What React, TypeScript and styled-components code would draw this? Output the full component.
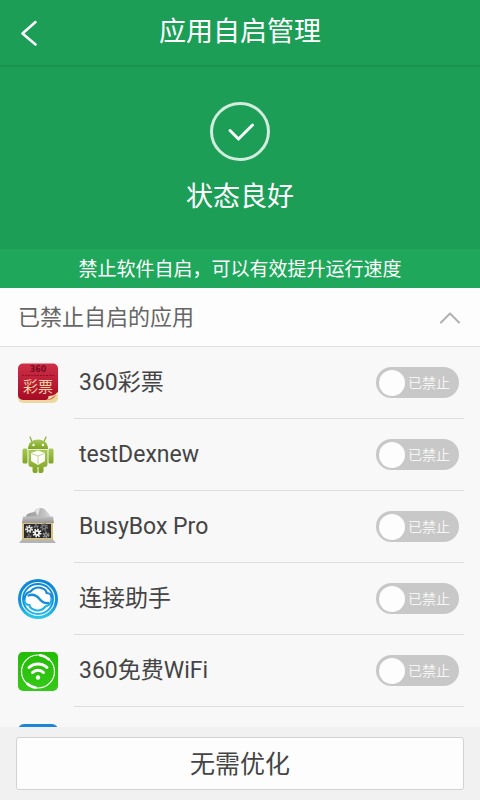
import React, { useState } from "react";
import styled, { createGlobalStyle } from "styled-components";

const GlobalStyle = createGlobalStyle`
  *, *::before, *::after { box-sizing: border-box; }
  body {
    margin: 0;
    background: #f8f8f8;
    font-family: Roboto, "Noto Sans CJK SC", sans-serif;
  }
  button { font: inherit; border: 0; padding: 0; background: none; cursor: pointer; }
`;

const Page = styled.div`
  display: flex;
  flex-direction: column;
  height: 100vh;
  overflow: hidden;
`;

const Header = styled.header`
  flex: none;
  display: grid;
  grid-template-columns: 64px 1fr 64px;
  height: 67px;
  background: #1c9e57;
  border-bottom: 2px solid #19914f;
`;

const BackButton = styled.button`
  display: flex;
  align-items: center;
  padding-left: 20px;
`;

const Title = styled.h1`
  margin: 0;
  font-size: 27px;
  font-weight: 400;
  line-height: 65px;
  text-align: center;
  color: #fff;
`;

const Hero = styled.section`
  flex: none;
  display: flex;
  flex-direction: column;
  align-items: center;
  gap: 18px;
  height: 182px;
  padding-top: 34px;
  background: #1c9e57;
`;

const Status = styled.p`
  margin: 0;
  font-size: 27px;
  line-height: 36px;
  color: #fff;
`;

const Notice = styled.p`
  flex: none;
  margin: 0;
  padding-top: 3px;
  font-size: 19px;
  line-height: 36px;
  text-align: center;
  white-space: nowrap;
  color: #fff;
  background: #1fa85c;
`;

const SectionButton = styled.button`
  flex: none;
  display: flex;
  align-items: center;
  justify-content: space-between;
  width: 100%;
  height: 59px;
  && { padding: 2px 20px 0 18px; background: #fdfdfd; border-bottom: 1px solid #dfdfdf; }
`;

const SectionTitle = styled.span`
  font-size: 22px;
  line-height: 32px;
  color: #666;
`;

const List = styled.ul`
  flex: 1;
  min-height: 0;
  margin: 0;
  padding: 0;
  overflow: hidden;
  list-style: none;
  background: #f8f8f8;
`;

const Row = styled.li`
  display: flex;
  gap: 16px;
  height: 72px;
  padding: 0 16px 0 18px;
`;

const IconSlot = styled.span`
  flex: none;
  display: flex;
  align-items: center;
  width: 40px;
`;

const RowBody = styled.div`
  flex: 1;
  display: flex;
  align-items: center;
  justify-content: space-between;
  padding: 0 5px;
  border-bottom: 1px solid #dedede;
`;

const AppName = styled.span`
  padding-top: 1px;
  font-size: 23px;
  line-height: 32px;
  color: #444;
`;

const Switch = styled.label<{ $allowed: boolean }>`
  position: relative;
  display: flex;
  flex-direction: ${(p) => (p.$allowed ? "row-reverse" : "row")};
  align-items: center;
  gap: 3px;
  width: 83px;
  height: 31px;
  padding: 0 3px;
  border-radius: 16px;
  background: ${(p) => (p.$allowed ? "#1fa85c" : "#c8c8c8")};
  cursor: pointer;
`;

const SwitchInput = styled.input`
  position: absolute;
  inset: 0;
  width: 100%;
  height: 100%;
  margin: 0;
  opacity: 0;
  cursor: pointer;
`;

const Knob = styled.span`
  flex: none;
  width: 26px;
  height: 26px;
  border-radius: 50%;
  background: #fdfdfd;
`;

const SwitchText = styled.span`
  font-size: 14px;
  line-height: 20px;
  white-space: nowrap;
  color: #f5f5f5;
`;

const Footer = styled.footer`
  flex: none;
  padding: 10px 16px;
  background: #f1f1f1;
`;

const OptimizeButton = styled.button`
  display: block;
  width: 100%;
  height: 53px;
  && {
    padding-top: 3px;
    font-size: 25px;
    line-height: 48px;
    color: #444;
    background: #fdfdfd;
    border: 1px solid #d3d3d3;
    border-radius: 3px;
  }
`;

const LotteryIcon = () => (
  <svg width="40" height="40" viewBox="0 0 40 40" aria-hidden="true">
    <defs>
      <linearGradient id="lotteryRed" x1="0" y1="0" x2="0" y2="1">
        <stop offset="0" stopColor="#cf3048" />
        <stop offset="1" stopColor="#a80a26" />
      </linearGradient>
    </defs>
    <rect x="0" y="3" width="40" height="37" rx="5" fill="#ead9a0" />
    <path d="M5 .5h30a5 5 0 0 1 5 5V29L30 37H5a5 5 0 0 1-5-5V5.500a5 5 0 0 1 5-5z" fill="url(#lotteryRed)" />
    <path d="M28 37c2-1 2.500-2 2.500-4 3 0 7-1 9.500-4-1 5-6 8-12 8z" fill="#f4d6b0" />
    <path d="M28 37c3-.5 8-3 10-6-1 4-4 6-10 6z" fill="#dd6b42" />
    <path d="M4 12.500h32" stroke="#8d0f24" strokeDasharray="2 1" />
    <text x="20" y="9" textAnchor="middle" fontFamily="DejaVu Sans" fontWeight="700" fontSize="8" fill="#790c1e">360</text>
    <text x="20" y="29" textAnchor="middle" fontFamily="Noto Sans CJK SC" fontSize="15" fill="#f6d3a2">彩票</text>
  </svg>
);

const AndroidIcon = () => (
  <svg width="40" height="40" viewBox="0 0 40 40" aria-hidden="true">
    <defs>
      <linearGradient id="robotGreen" x1="0" y1="0" x2="0" y2="1">
        <stop offset="0" stopColor="#a7c957" />
        <stop offset="1" stopColor="#7fa522" />
      </linearGradient>
    </defs>
    <path d="M14 7l-2-5M26 7l2-5" stroke="#8fae3c" strokeWidth="1.300" strokeLinecap="round" />
    <g fill="url(#robotGreen)">
      <path d="M10 14C10 8 14 4.500 20 4.500S30 8 30 14z" />
      <rect x="4.500" y="13.500" width="5" height="15" rx="1.500" />
      <rect x="30.500" y="13.500" width="5" height="15" rx="1.500" />
      <path d="M10.500 15h19v14a3 3 0 0 1-3 3h-1v4a2 2 0 0 1-2 2h-2a2 2 0 0 1-1-2v-4h-1v4a2 2 0 0 1-1 2h-2a2 2 0 0 1-2-2v-4h-1a3 3 0 0 1-3-3z" />
    </g>
    <path d="M10 14.500h20" stroke="#e9f2cd" />
    <circle cx="15.500" cy="10" r="1.200" fill="#fff" />
    <circle cx="25" cy="10" r="1.200" fill="#fff" />
    <path d="M20 15.500l7 2.500v8l-7 4-7-4v-8z" fill="#fdfdf8" />
    <path d="M13.500 18.500l6.500 2.500 6.500-2.500M20 21v8" fill="none" stroke="#b5c68c" strokeWidth=".8" />
  </svg>
);

const gears: [number, number, number, string][] = [
  [11, 22, 3, "#dedede"],
  [19, 26, 3.5, "#f4f4f4"],
  [26, 20, 3, "#777"],
  [28, 28, 2.5, "#999"],
  [18, 19, 1.500, "#8c8c8c"],
  [11, 29, 1.500, "#777"],
];

const BusyBoxIcon = () => (
  <svg width="40" height="40" viewBox="0 0 40 40" aria-hidden="true">
    <defs>
      <linearGradient id="boxDisc" x1="0" y1="0" x2="1" y2="0">
        <stop offset="0" stopColor="#999" />
        <stop offset=".5" stopColor="#b0b0b0" />
        <stop offset="1" stopColor="#d8d8d8" />
      </linearGradient>
      <linearGradient id="boxLid" x1="0" y1="0" x2="0" y2="1">
        <stop offset="0" stopColor="#c2c2c2" />
        <stop offset="1" stopColor="#979797" />
      </linearGradient>
    </defs>
    <path d="M8 10c0-3 3-4 8-5 2-3 4-4 7-4 4 0 6 4 7 5 2 1 2 3 2 4z" fill="url(#boxDisc)" />
    <path d="M20 9L17 4c2-2 3-3 5-3z" fill="#e4e4e4" />
    <path d="M5 9.500h30l1 6.500H4z" fill="url(#boxLid)" />
    <rect x="4" y="16" width="31" height="17" fill="#d8c27e" />
    <rect x="6" y="17" width="27" height="14" fill="#2b2b2b" />
    {gears.map(([x, y, r, color]) => (
      <g key={`${x}-${y}`}>
        <circle cx={x} cy={y} r={r - 0.5} fill={color} />
        <circle cx={x} cy={y} r={r} fill="none" stroke={color} strokeWidth="2" strokeDasharray="1.500 1.200" />
        <circle cx={x} cy={y} r={r / 3} fill="#2b2b2b" />
      </g>
    ))}
    <path d="M4 32.500h31l3 3.500H1z" fill="#b4b4b4" />
  </svg>
);

const LinkIcon = () => (
  <svg width="40" height="40" viewBox="0 0 40 40" aria-hidden="true">
    <defs>
      <linearGradient id="linkBlue" x1="0" y1="0" x2="0" y2="1">
        <stop offset="0" stopColor="#1084d2" />
        <stop offset=".6" stopColor="#1291e0" />
        <stop offset="1" stopColor="#30cbe8" />
      </linearGradient>
    </defs>
    <circle cx="20" cy="20" r="20" fill="url(#linkBlue)" />
    <circle cx="20" cy="20" r="16.500" fill="none" stroke="#e2f4fd" strokeWidth="1.200" />
    <circle cx="20" cy="20" r="14" fill="#fff" />
    <g fill="none" strokeWidth="2.200" strokeLinecap="round" strokeLinejoin="round">
      <path d="M6.500 20.500c0-4 2.500-7 6-8 3-4 8-5 12-3 3 1 4 3 4 4.500 3 0 5 2 5 4.500" stroke="#1689d6" />
      <path d="M33.500 19.500c0 4-2.500 7-6 8-3 4-8 5-12 3-3-1-4-3-4-4.500-3 0-5-2-5-4.500" stroke="#22b0e6" />
      <path d="M10.500 16.500c5-2 8.500.5 11 3.500s5 4.500 8.500 4" stroke="#168fda" strokeWidth="2.400" />
    </g>
  </svg>
);

const WifiIcon = () => (
  <svg width="40" height="40" viewBox="0 0 40 40" aria-hidden="true">
    <defs>
      <linearGradient id="wifiGreen" x1="0" y1="0" x2="0" y2="1">
        <stop offset="0" stopColor="#24bc05" />
        <stop offset="1" stopColor="#35c919" />
      </linearGradient>
    </defs>
    <rect y="1" width="40" height="39" rx="5" fill="url(#wifiGreen)" />
    <g fill="none" stroke="#fff" strokeLinecap="round">
      <circle cx="20" cy="20.500" r="16.500" strokeWidth="1.200" />
      <path d="M22 4.200A16.500 16.500 0 0 1 31 8.500M18 36.800A16.500 16.500 0 0 1 9 32.500" strokeWidth="2.400" />
      <path d="M11 16.500a13 13 0 0 1 18 0M14.500 21.500a8 8 0 0 1 11 0" strokeWidth="3" />
    </g>
    <circle cx="20" cy="26.500" r="2.200" fill="#fff" />
  </svg>
);

const BlueIcon = () => (
  <svg width="40" height="40" viewBox="0 0 40 40" aria-hidden="true">
    <rect y="1" width="40" height="39" rx="6" fill="#1b86d9" />
  </svg>
);

const apps = [
  { name: "360彩票", Icon: LotteryIcon },
  { name: "testDexnew", Icon: AndroidIcon },
  { name: "BusyBox Pro", Icon: BusyBoxIcon },
  { name: "连接助手", Icon: LinkIcon },
  { name: "360免费WiFi", Icon: WifiIcon },
];

function AppRow({ name, Icon }: { name: string; Icon: React.FC }) {
  const [allowed, setAllowed] = useState(false);
  const nameId = `app-${name.replace(/\s/g, "-")}`;
  return (
    <Row>
      <IconSlot><Icon /></IconSlot>
      <RowBody>
        <AppName id={nameId}>{name}</AppName>
        <Switch $allowed={allowed}>
          <SwitchInput
            type="checkbox"
            role="switch"
            aria-labelledby={nameId}
            checked={allowed}
            onChange={(e) => setAllowed(e.target.checked)}
          />
          <Knob />
          <SwitchText>{allowed ? "已允许" : "已禁止"}</SwitchText>
        </Switch>
      </RowBody>
    </Row>
  );
}

export default function App() {
  const [open, setOpen] = useState(true);
  return (
    <Page>
      <GlobalStyle />
      <Header>
        <BackButton aria-label="返回">
          <svg width="18" height="26" viewBox="0 0 18 26" fill="none" stroke="#fff" strokeWidth="2.500" strokeLinecap="round" strokeLinejoin="round">
            <path d="M15.500 2L2.500 13.500l13 11" />
          </svg>
        </BackButton>
        <Title>应用自启管理</Title>
      </Header>
      <Hero>
        <svg width="62" height="60" viewBox="0 0 62 60" fill="none" aria-hidden="true">
          <ellipse cx="31" cy="30.500" rx="28.500" ry="28" stroke="#d2ecde" strokeWidth="3" />
          <path d="M21 29.500l8.500 8.500L43.500 24" stroke="#f8fcfa" strokeWidth="3" strokeLinecap="round" />
        </svg>
        <Status>状态良好</Status>
      </Hero>
      <Notice>禁止软件自启，可以有效提升运行速度</Notice>
      <SectionButton aria-expanded={open} onClick={() => setOpen(!open)}>
        <SectionTitle>已禁止自启的应用</SectionTitle>
        <svg width="20" height="12" viewBox="0 0 20 12" fill="none" stroke="#b0b0b0" strokeWidth="2" strokeLinecap="round" strokeLinejoin="round" aria-hidden="true">
          <path d={open ? "M1 10.500l9-9 9 9" : "M1 1.500l9 9 9-9"} />
        </svg>
      </SectionButton>
      <List>
        {open && (
          <>
            {apps.map((app) => <AppRow key={app.name} {...app} />)}
            <Row>
              <IconSlot><BlueIcon /></IconSlot>
            </Row>
          </>
        )}
      </List>
      <Footer>
        <OptimizeButton>无需优化</OptimizeButton>
      </Footer>
    </Page>
  );
}
